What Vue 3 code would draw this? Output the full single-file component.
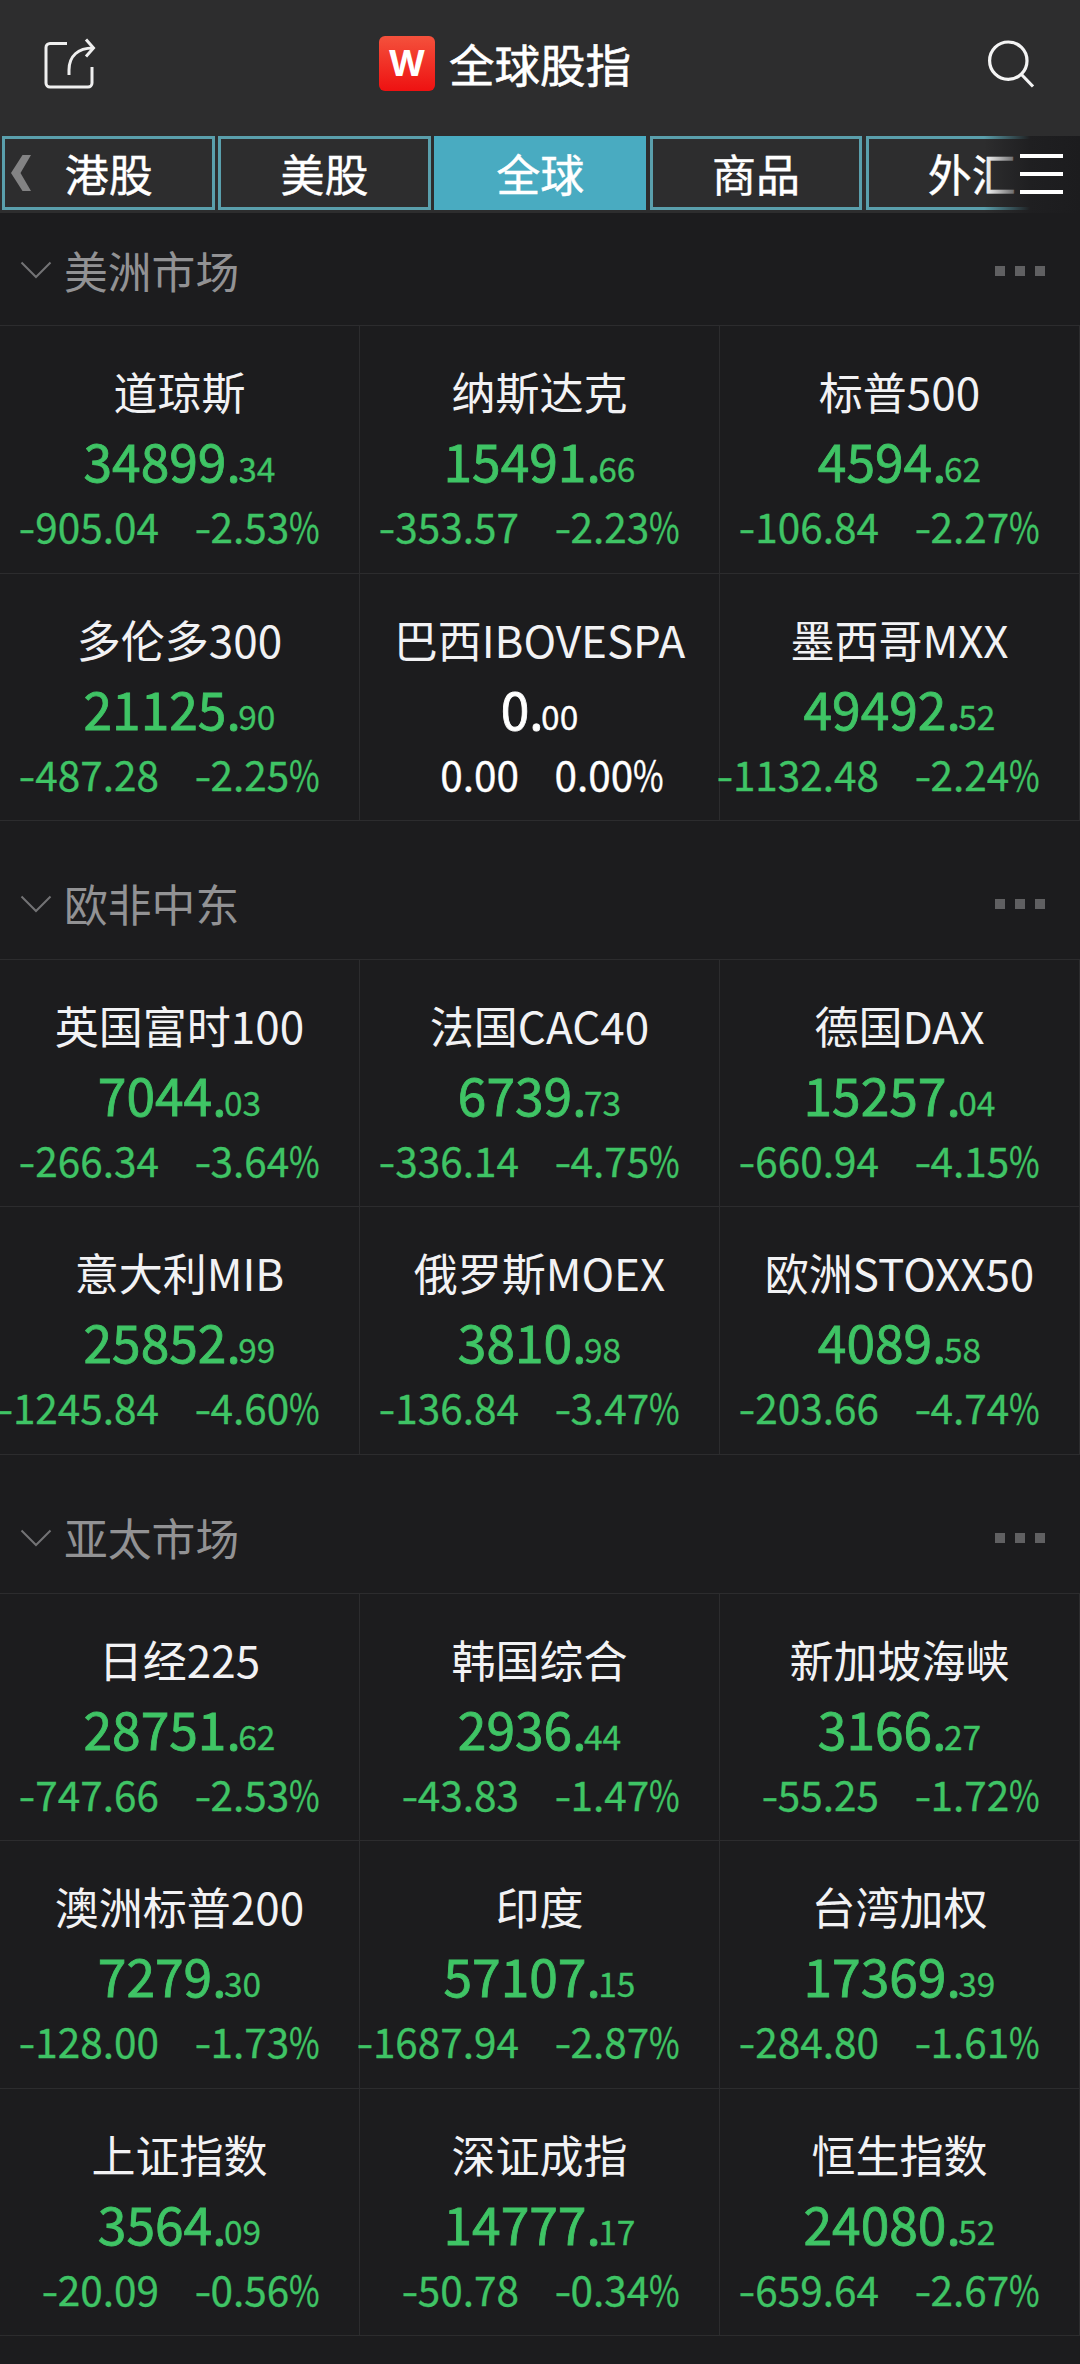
<script setup>
const tabs = ['港股', '美股', '全球', '商品', '外汇']
const active = '全球'

const q = (name, int, dec, chg, pct) => ({ name, int, dec, chg, pct })
const sections = [
  {
    title: '美洲市场',
    items: [
      q('道琼斯', '34899', '34', '-905.04', '-2.53%'),
      q('纳斯达克', '15491', '66', '-353.57', '-2.23%'),
      q('标普500', '4594', '62', '-106.84', '-2.27%'),
      q('多伦多300', '21125', '90', '-487.28', '-2.25%'),
      q('巴西IBOVESPA', '0', '00', '0.00', '0.00%'),
      q('墨西哥MXX', '49492', '52', '-1132.48', '-2.24%'),
    ],
  },
  {
    title: '欧非中东',
    items: [
      q('英国富时100', '7044', '03', '-266.34', '-3.64%'),
      q('法国CAC40', '6739', '73', '-336.14', '-4.75%'),
      q('德国DAX', '15257', '04', '-660.94', '-4.15%'),
      q('意大利MIB', '25852', '99', '-1245.84', '-4.60%'),
      q('俄罗斯MOEX', '3810', '98', '-136.84', '-3.47%'),
      q('欧洲STOXX50', '4089', '58', '-203.66', '-4.74%'),
    ],
  },
  {
    title: '亚太市场',
    items: [
      q('日经225', '28751', '62', '-747.66', '-2.53%'),
      q('韩国综合', '2936', '44', '-43.83', '-1.47%'),
      q('新加坡海峡', '3166', '27', '-55.25', '-1.72%'),
      q('澳洲标普200', '7279', '30', '-128.00', '-1.73%'),
      q('印度', '57107', '15', '-1687.94', '-2.87%'),
      q('台湾加权', '17369', '39', '-284.80', '-1.61%'),
      q('上证指数', '3564', '09', '-20.09', '-0.56%'),
      q('深证成指', '14777', '17', '-50.78', '-0.34%'),
      q('恒生指数', '24080', '52', '-659.64', '-2.67%'),
    ],
  },
]
const isDown = (v) => v.startsWith('-')
const digits = (v) => v.replace(/[-%]/g, '')
</script>

<template>
  <div class="app">
    <header class="top">
      <div class="bar">
        <svg class="share" width="56" height="56" viewBox="0 0 56 56" fill="none" stroke="#efefef" stroke-width="3">
          <path d="M27 9.500H10a4 4 0 0 0-4 4V49a4 4 0 0 0 4 4h38a4 4 0 0 0 4-4V33" />
          <path d="M29 41V36C29 22 38 14 53 14" />
          <path d="M46 5.500L53.500 14L46 22.500" />
        </svg>
        <div class="brand">
          <span class="logo">W</span>
          <h1>全球股指</h1>
        </div>
        <svg class="search" width="50" height="50" viewBox="0 0 50 50" fill="none" stroke="#f4f4f4" stroke-width="3.200">
          <circle cx="22.300" cy="21.700" r="18.700" />
          <path d="M35 35L47 47.500" />
        </svg>
      </div>
      <nav class="tabs">
        <div v-for="t in tabs" :key="t" class="tab" :class="{ on: t === active }">{{ t }}</div>
        <svg class="prev" width="21" height="36" viewBox="0 0 21 36"><path d="M11.500 0H20L9.500 18L20 36H11.500L0 18Z" fill="#838384" /></svg>
        <div class="more-tabs"><i></i><i></i><i></i></div>
      </nav>
    </header>

    <section v-for="s in sections" :key="s.title" class="market">
      <div class="head">
        <svg class="chev" width="32" height="18" viewBox="0 0 32 18" fill="none" stroke="#737375" stroke-width="2"><path d="M1.500 1.500L16 16L30.500 1.500" /></svg>
        <h2>{{ s.title }}</h2>
        <div class="dots"><i></i><i></i><i></i></div>
      </div>
      <div class="grid">
        <div v-for="c in s.items" :key="c.name" class="cell" :class="{ down: isDown(c.chg) }">
          <div class="name">{{ c.name }}</div>
          <div class="price">{{ c.int }}<span class="pt">.</span><small>{{ c.dec }}</small></div>
          <div class="change">
            <span class="abs"><b v-if="isDown(c.chg)">-</b>{{ digits(c.chg) }}</span>
            <span class="pct"><b v-if="isDown(c.pct)">-</b>{{ digits(c.pct) }}<em>%</em></span>
          </div>
        </div>
      </div>
    </section>
  </div>
</template>

<style>
body { background: #1c1c1e; }
</style>

<style scoped>
.app {
  width: 1080px;
  height: 2364px;
  overflow: hidden;
  background: #1c1c1e;
  color: #fff;
  font-family: "Noto Sans CJK SC", sans-serif;
}
h1, h2 { margin: 0; font-weight: 400; }
.top { height: 213px; background: #2d2d2e; }
.bar {
  height: 136px;
  box-sizing: border-box;
  padding: 34px 44px 0 40px;
  display: flex;
  align-items: flex-start;
}
.search { margin: 5px 0 0 auto; }
.brand { display: flex; align-items: flex-start; gap: 14px; margin: 2px 0 0 283px; }
.logo {
  width: 56px;
  height: 55px;
  border-radius: 6px;
  background: linear-gradient(#f4513c, #ee1111);
  font: 700 36px/54px Inter, sans-serif;
  text-align: center;
}
h1 { font-size: 45.500px; line-height: 54px; -webkit-text-stroke: 0.600px #fff; }
.tabs { position: relative; display: flex; gap: 3.300px; padding-left: 2.400px; overflow: hidden; height: 77px; }
.tab {
  flex: none;
  box-sizing: border-box;
  width: 212.500px;
  height: 74px;
  border: 3px solid #5a9fac;
  font-size: 44px;
  line-height: 69px;
  text-align: center;
  -webkit-text-stroke: 0.400px #fff;
}
.tab.on { background: #49abc1; border-color: #49abc1; }
.prev { position: absolute; left: 11px; top: 19px; }
.more-tabs {
  position: absolute;
  right: 0;
  top: 0;
  width: 96px;
  height: 77px;
  box-sizing: border-box;
  padding: 18px 17.500px 0 0;
  display: flex;
  flex-direction: column;
  align-items: flex-end;
  gap: 14px;
  background: linear-gradient(90deg, rgba(28, 28, 30, 0), #1f1f21 48%, #1c1c1e);
}
.more-tabs i { width: 43px; height: 4px; background: #fff; }
.market { padding-bottom: 26.600px; }
.head { height: 112px; display: flex; align-items: center; box-sizing: border-box; padding: 1px 35.500px 0 20px; }
.chev { margin-top: 1px; }
h2 { margin-left: 12px; font-size: 43.800px; line-height: 60px; color: #929294; }
.dots { margin: 2px 0 0 auto; display: flex; gap: 9.700px; }
.dots i { width: 10px; height: 10px; background: #606062; }
.grid {
  display: grid;
  grid-template-columns: repeat(3, 360px);
  grid-auto-rows: 247.600px;
  margin-bottom: -1px;
  border-top: 1px solid #2c2c2e;
}
.cell {
  box-sizing: border-box;
  padding-top: 32px;
  border-right: 1px solid #2c2c2e;
  border-bottom: 1px solid #2c2c2e;
  white-space: nowrap;
}
.name { text-align: center; font-size: 44px; line-height: 66px; color: #f2f2f4; }
.price { text-align: center; font-size: 51.500px; line-height: 71px; -webkit-text-stroke: 0.800px currentColor; }
.price .pt { letter-spacing: -2.500px; }
.price small { font-size: 33.500px; line-height: 1; -webkit-text-stroke: 0.300px currentColor; }
.change { display: flex; font-size: 40.500px; line-height: 61px; -webkit-text-stroke: 0.300px currentColor; }
.abs { width: 159px; display: flex; justify-content: flex-end; }
.pct { margin-left: 35.500px; display: flex; }
.change b { font-weight: 400; display: inline-block; transform: scaleX(1.200); margin-right: 1px; }
.change b { margin-left: 1px; }
.change em { font-style: normal; display: inline-block; transform: scaleX(0.820); transform-origin: left; }
.down .price, .down .change { color: #3fc465; }
</style>
